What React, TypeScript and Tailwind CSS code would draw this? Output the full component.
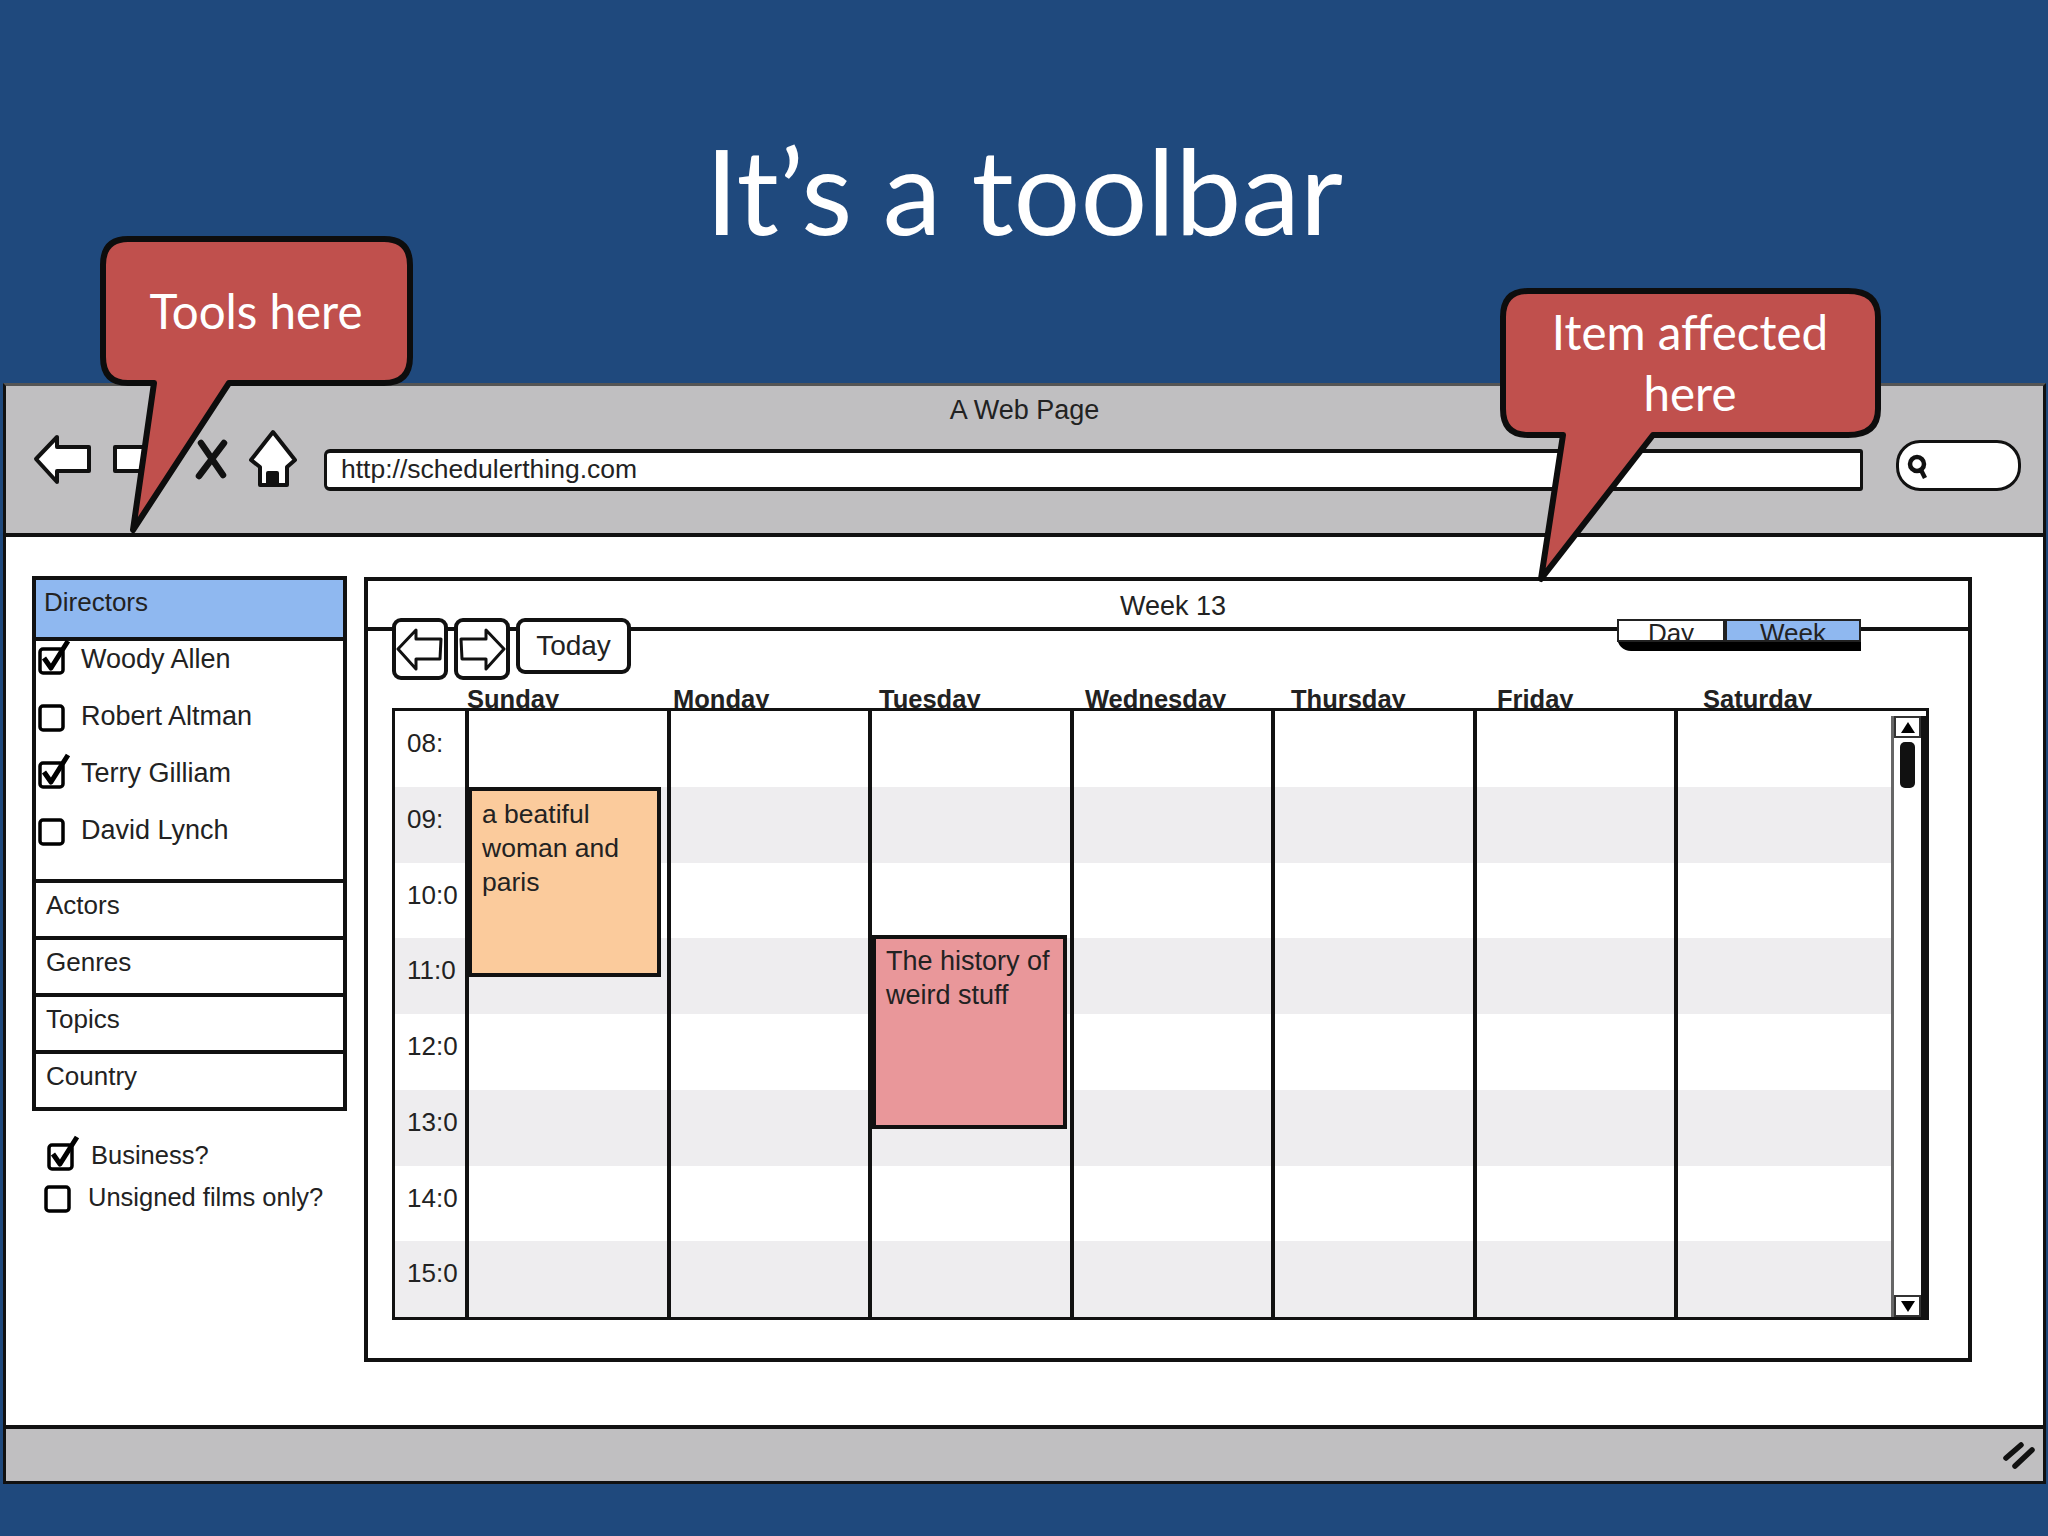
const ui = "font-['Liberation_Sans',Arial,sans-serif] text-[#222]";

function CheckBox({ checked }: { checked?: boolean }) {
  return (
    <svg className="w-[34px] h-[40px] shrink-0" viewBox="0 0 34 40" fill="none" stroke="#000">
      <rect x="3" y="11" width="23" height="24" rx="3" strokeWidth="3.5" />
      {checked && <path d="M7 20l7 10L31 3" strokeWidth="5" strokeLinejoin="round" />}
    </svg>
  );
}

function Director({ name, checked }: { name: string; checked?: boolean }) {
  return (
    <div className="flex items-center h-[42px] pl-[1px] gap-[10px] text-[27px]">
      <CheckBox checked={checked} />
      <span className="pt-[2px]">{name}</span>
    </div>
  );
}

function Accordion({ label }: { label: string }) {
  return (
    <div className="h-[57px] border-t-[4px] border-[#111] pl-[10px] pt-[6px] text-[26px] leading-[32px]">{label}</div>
  );
}

function ArrowBtn({ dir }: { dir: "left" | "right" }) {
  return (
    <div className="w-[56px] h-[62px] border-[4px] border-[#111] rounded-[9px] bg-white flex items-center justify-center">
      <svg className="w-[48px] h-[46px]" viewBox="0 0 48 46" fill="none" stroke="#111" strokeWidth="3" strokeLinejoin="round">
        {dir === "left" ? (
          <path d="M2 23L20 4v9h25l-1 20H20v10z" />
        ) : (
          <path d="M46 23L28 4v9H3l1 20h24v10z" />
        )}
      </svg>
    </div>
  );
}

function Callout({
  className,
  d,
  textClass,
  children,
}: {
  className: string;
  d: string;
  textClass: string;
  children: React.ReactNode;
}) {
  return (
    <div className={className}>
      <svg className="absolute inset-0 w-full h-full" fill="#c0504d" stroke="#0d0d0d" strokeWidth="6" strokeLinejoin="round">
        <path d={d} />
      </svg>
      <div className={textClass}>{children}</div>
    </div>
  );
}

const times = ["08:", "09:", "10:0", "11:0", "12:0", "13:0", "14:0", "15:0"];
const dayLabels = ["Sunday", "Monday", "Tuesday", "Wednesday", "Thursday", "Friday", "Saturday"];

export default function App() {
  return (
    <div className="relative w-[2048px] h-[1536px] overflow-hidden bg-[#1f497d] flex flex-col">
      {/* slide title */}
      <div className="h-[383px] shrink-0 flex justify-center pt-[118px] text-white text-[118px] leading-[144px] font-['Lato',sans-serif]">
        It’s a toolbar
      </div>

      {/* browser window */}
      <div className={`${ui} ml-[3px] w-[2043px] h-[1101px] border-[3px] border-[#111] border-t-[#555] flex flex-col bg-white`}>
        <div className="h-[151px] shrink-0 bg-[#c0bfc1] border-b-[4px] border-[#111]">
          <div className="text-center text-[27px] leading-[32px] pt-[8px]">A Web Page</div>
          <div className="flex items-center pl-[27px]">
            <svg className="w-[60px] h-[54px]" viewBox="0 0 60 54" fill="#fff" stroke="#111" strokeWidth="4" strokeLinejoin="round">
              <path d="M3 27L24 5v10h32v24H24v11z" />
            </svg>
            <svg className="w-[60px] h-[54px] ml-[18px]" viewBox="0 0 60 54" fill="#fff" stroke="#111" strokeWidth="4" strokeLinejoin="round">
              <path d="M57 27L36 5v10H4v24h32v11z" />
            </svg>
            <svg className="w-[34px] h-[42px] ml-[24px]" viewBox="0 0 34 42" fill="none" stroke="#111" strokeWidth="6.5" strokeLinecap="round">
              <path d="M6 5l22 32M29 5L4 38" />
            </svg>
            <svg className="w-[50px] h-[60px] ml-[19px]" viewBox="0 0 50 60" fill="#fff" stroke="#111" strokeWidth="4" strokeLinejoin="round">
              <path d="M25 3L47 31 39 38V56H12V38L3 31z" />
              <path d="M20 56V44h9v12z" fill="#111" />
            </svg>
            <div className="w-[1539px] h-[42px] ml-[26px] mt-[22px] bg-white border-y-[4px] border-x-[3px] border-[#111] rounded-l-[6px] rounded-r-[3px] pl-[14px] text-[26.5px] leading-[32px]">
              http://schedulerthing.com
            </div>
            <div className="w-[125px] h-[51px] ml-[33px] mt-[14px] bg-white border-[3px] border-[#111] rounded-[24px] flex items-center pl-[6px]">
              <svg className="w-[26px] h-[28px]" viewBox="0 0 26 28" fill="none" stroke="#111" strokeWidth="4.5">
                <circle cx="12" cy="12" r="7" />
                <path d="M16 18l4 8" />
              </svg>
            </div>
          </div>
        </div>

        <div className="flex-1 flex pt-[39px] pl-[26px]">
          {/* filter sidebar */}
          <div className="w-[315px] shrink-0">
            <div className="border-[4px] border-[#111]">
              <div className="h-[61px] bg-[#8fb8f0] border-b-[4px] border-[#111] pl-[8px] pt-[6px] text-[26px] leading-[32px]">
                Directors
              </div>
              <div className="h-[242px] -mt-[4px] flex flex-col gap-[15px]">
                <Director name="Woody Allen" checked />
                <Director name="Robert Altman" />
                <Director name="Terry Gilliam" checked />
                <Director name="David Lynch" />
              </div>
              <Accordion label="Actors" />
              <Accordion label="Genres" />
              <Accordion label="Topics" />
              <Accordion label="Country" />
            </div>
            <div className="flex items-center h-[42px] mt-[22px] pl-[14px] gap-[11px] text-[25.5px]">
              <CheckBox checked />
              <span className="pt-[2px]">Business?</span>
            </div>
            <div className="flex items-center h-[42px] pl-[11px] gap-[11px] text-[25.5px]">
              <CheckBox />
              <span className="pt-[2px]">Unsigned films only?</span>
            </div>
          </div>

          {/* week calendar */}
          <div className="w-[1608px] h-[785px] ml-[17px] mt-[1px] border-[4px] border-[#111] flex flex-col">
            <div className="h-[50px] shrink-0 border-b-[4px] border-[#111] text-center text-[27px] leading-[32px] pt-[9px] pl-[10px]">
              Week 13
            </div>
            <div className="flex justify-between -mt-[13px] pl-[24px] pr-[107px]">
              <div className="flex gap-[6px]">
                <ArrowBtn dir="left" />
                <ArrowBtn dir="right" />
                <div className="w-[115px] h-[56px] border-[4px] border-[#111] rounded-[9px] bg-white flex items-center justify-center text-[28px]">
                  Today
                </div>
              </div>
              <div className="flex w-[244px] h-[32px] mt-[1px] bg-[#000] rounded-bl-[14px] pb-[9px]">
                <div className="w-[108px] bg-white border-[2px] border-[#222] overflow-hidden text-center text-[26px] leading-[24px]">Day</div>
                <div className="flex-1 bg-[#8fb8f0] border-[2px] border-[#222] overflow-hidden text-center text-[26px] leading-[24px]">Week</div>
              </div>
            </div>
            <div className="flex h-[33px] -mt-[5px] pl-[99px] text-[25.5px] font-bold leading-[32px]">
              {dayLabels.map((d) => (
                <div key={d} className="w-[206px] pt-[8px]">{d}</div>
              ))}
            </div>

            <div className="relative w-[1537px] h-[612px] ml-[24px] border-[3px] border-[#111] bg-white flex">
              <div className="flex-1 flex flex-col">
                {times.map((t, i) => (
                  <div key={t} className={`flex-1 flex ${i % 2 === 1 ? "bg-[#eeedef]" : "bg-white"}`}>
                    <div className="w-[70px] pl-[12px] pt-[16px] text-[26px] leading-[32px] overflow-hidden">{t}</div>
                    {dayLabels.map((d, j) => (
                      <div key={d} className={`${j === 6 ? "flex-1" : "w-[201.5px]"} border-l-[4px] border-[#111]`} />
                    ))}
                  </div>
                ))}
              </div>

              <div className="w-[35px] shrink-0 bg-white border-l-[3px] border-l-[#666] border-r-[5px] border-r-[#111] flex flex-col items-center mt-[5px]">
                <div className="w-full h-[22px] border-[2px] border-[#333] flex items-center justify-center">
                  <div className="w-0 h-0 border-x-[7px] border-x-transparent border-b-[11px] border-b-black" />
                </div>
                <div className="w-[15px] h-[46px] bg-[#111] rounded-[5px] mt-[4px]" />
                <div className="mt-auto w-full h-[22px] border-[2px] border-[#333] flex items-center justify-center">
                  <div className="w-0 h-0 border-x-[7px] border-x-transparent border-t-[11px] border-t-black" />
                </div>
              </div>

              <div className="absolute left-[73px] top-[76px] w-[193px] h-[190px] bg-[#fbcb9c] border-[4px] border-[#111] pl-[10px] pt-[6px] text-[26.5px] leading-[34px]">
                a beatiful
                <br />
                woman and
                <br />
                paris
              </div>
              <div className="absolute left-[477px] top-[224px] w-[195px] h-[194px] bg-[#e9979a] border-[4px] border-[#111] pl-[10px] pt-[5px] text-[27px] leading-[34px]">
                The history of
                <br />
                weird stuff
              </div>
            </div>
          </div>
        </div>

        <div className="h-[56px] shrink-0 bg-[#c0bfc1] border-t-[4px] border-[#111] flex justify-end items-center pr-[8px]">
          <svg className="w-[32px] h-[28px]" viewBox="0 0 32 28" fill="none" stroke="#111" strokeWidth="5.5" strokeLinecap="round">
            <path d="M3 17L18 4M12 25L29 9" />
          </svg>
        </div>
      </div>

      <Callout
        className="absolute left-[99px] top-[235px] w-[314px] h-[300px]"
        d="M29 4H285Q311 4 311 30V122Q311 148 285 148H130L34 295L55 148H29Q4 148 4 122V30Q4 4 29 4Z"
        textClass="absolute left-[4px] top-[46px] w-[306px] text-center text-white text-[47.5px] leading-[60px] font-['Lato',sans-serif]"
      >
        Tools here
      </Callout>
      <Callout
        className="absolute left-[1499px] top-[287px] w-[382px] h-[296px]"
        d="M29 4H349Q379 4 379 30V122Q379 148 349 148H154L42 292L64 148H29Q4 148 4 122V30Q4 4 29 4Z"
        textClass="absolute left-[4px] top-[14px] w-[374px] text-center text-white text-[47.5px] leading-[61px] font-['Lato',sans-serif]"
      >
        Item affected
        <br />
        here
      </Callout>
    </div>
  );
}
